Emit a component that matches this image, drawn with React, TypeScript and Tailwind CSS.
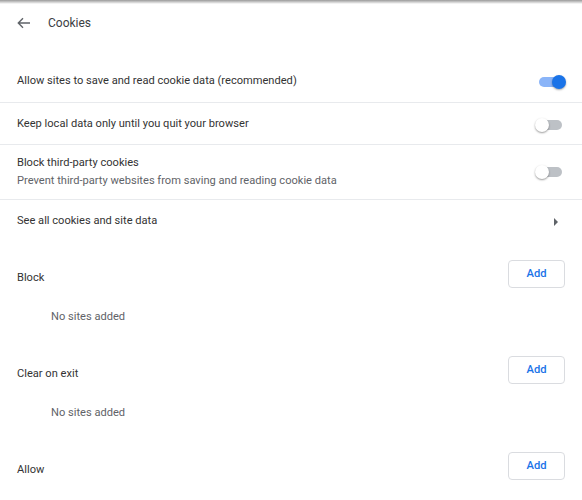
import { ReactNode } from "react";

function Toggle({ on }: { on: boolean }) {
  return (
    <div className="relative w-[30px] h-[14px]">
      <div
        className={
          on
            ? "absolute left-[4px] right-[4px] top-[2px] h-[10px] rounded-full bg-[#8ab4f8]"
            : "absolute left-[4px] right-[3px] top-[2px] h-[10px] rounded-full bg-[#bdc1c6]"
        }
      />
      <div
        className={
          on
            ? "absolute left-[17px] top-0 w-[14px] h-[14px] rounded-full bg-[#1a73e8] shadow-[0_1px_2px_rgba(0,0,0,0.35)]"
            : "absolute left-0 top-0 w-[14px] h-[14px] rounded-full bg-white shadow-[0_1px_2px_rgba(0,0,0,0.4)]"
        }
      />
    </div>
  );
}

function Row({
  children,
  className,
}: {
  children: ReactNode;
  className: string;
}) {
  return (
    <div
      className={`flex items-center justify-between pl-[17px] pr-[17px] border-b border-[#e8eaed] ${className}`}
    >
      {children}
    </div>
  );
}

function Section({ title }: { title: string }) {
  return (
    <div className="mb-[16px]">
      <div className="flex items-center justify-between h-[47px] pl-[17px] pr-[17px]">
        <span className="text-[#333333]">{title}</span>
        <button className="mb-[9px] w-[57px] h-[28px] rounded-[4px] border border-[#dadce0] bg-white text-[#1a73e8] font-medium text-[11.2px]">
          Add
        </button>
      </div>
      <div className="flex items-center h-[33px] pb-[2px] pl-[51px] text-[#5f6368]">
        No sites added
      </div>
    </div>
  );
}

export default function App() {
  return (
    <div className="w-[582px] h-[500px] overflow-hidden bg-white text-[11.1px] text-[#333333] font-['Roboto',sans-serif]">
      <div className="h-[4px] bg-gradient-to-b from-[#9a9a9a] to-white" />
      <div className="flex items-center h-[38px]">
        <svg
          className="ml-[17px]"
          width="14"
          height="12"
          viewBox="0 0 14 12"
          fill="none"
          stroke="#5f6368"
          strokeWidth="1.4"
        >
          <path d="M13 6H1.5M6 1.3L1.3 6L6 10.7" />
        </svg>
        <span className="ml-[17px] text-[12px] text-[#3c4043]">Cookies</span>
      </div>

      <div className="mt-[19px]">
        <Row className="h-[42px]">
          <span>Allow sites to save and read cookie data (recommended)</span>
          <Toggle on />
        </Row>
        <Row className="h-[42px] pt-[2px]">
          <span>Keep local data only until you quit your browser</span>
          <Toggle on={false} />
        </Row>
        <Row className="h-[55px]">
          <div className="flex flex-col gap-[1px]">
            <span>Block third-party cookies</span>
            <span className="text-[#5f6368]">
              Prevent third-party websites from saving and reading cookie data
            </span>
          </div>
          <Toggle on={false} />
        </Row>
        <div className="flex items-center justify-between h-[41px] pt-[2px] pl-[17px] pr-[24px]">
          <span>See all cookies and site data</span>
          <div className="w-0 h-0 border-y-[4px] border-y-transparent border-l-[4px] border-l-[#5f6368]" />
        </div>
      </div>

      <div className="mt-[14px]">
        <Section title="Block" />
        <Section title="Clear on exit" />
        <Section title="Allow" />
      </div>
    </div>
  );
}
